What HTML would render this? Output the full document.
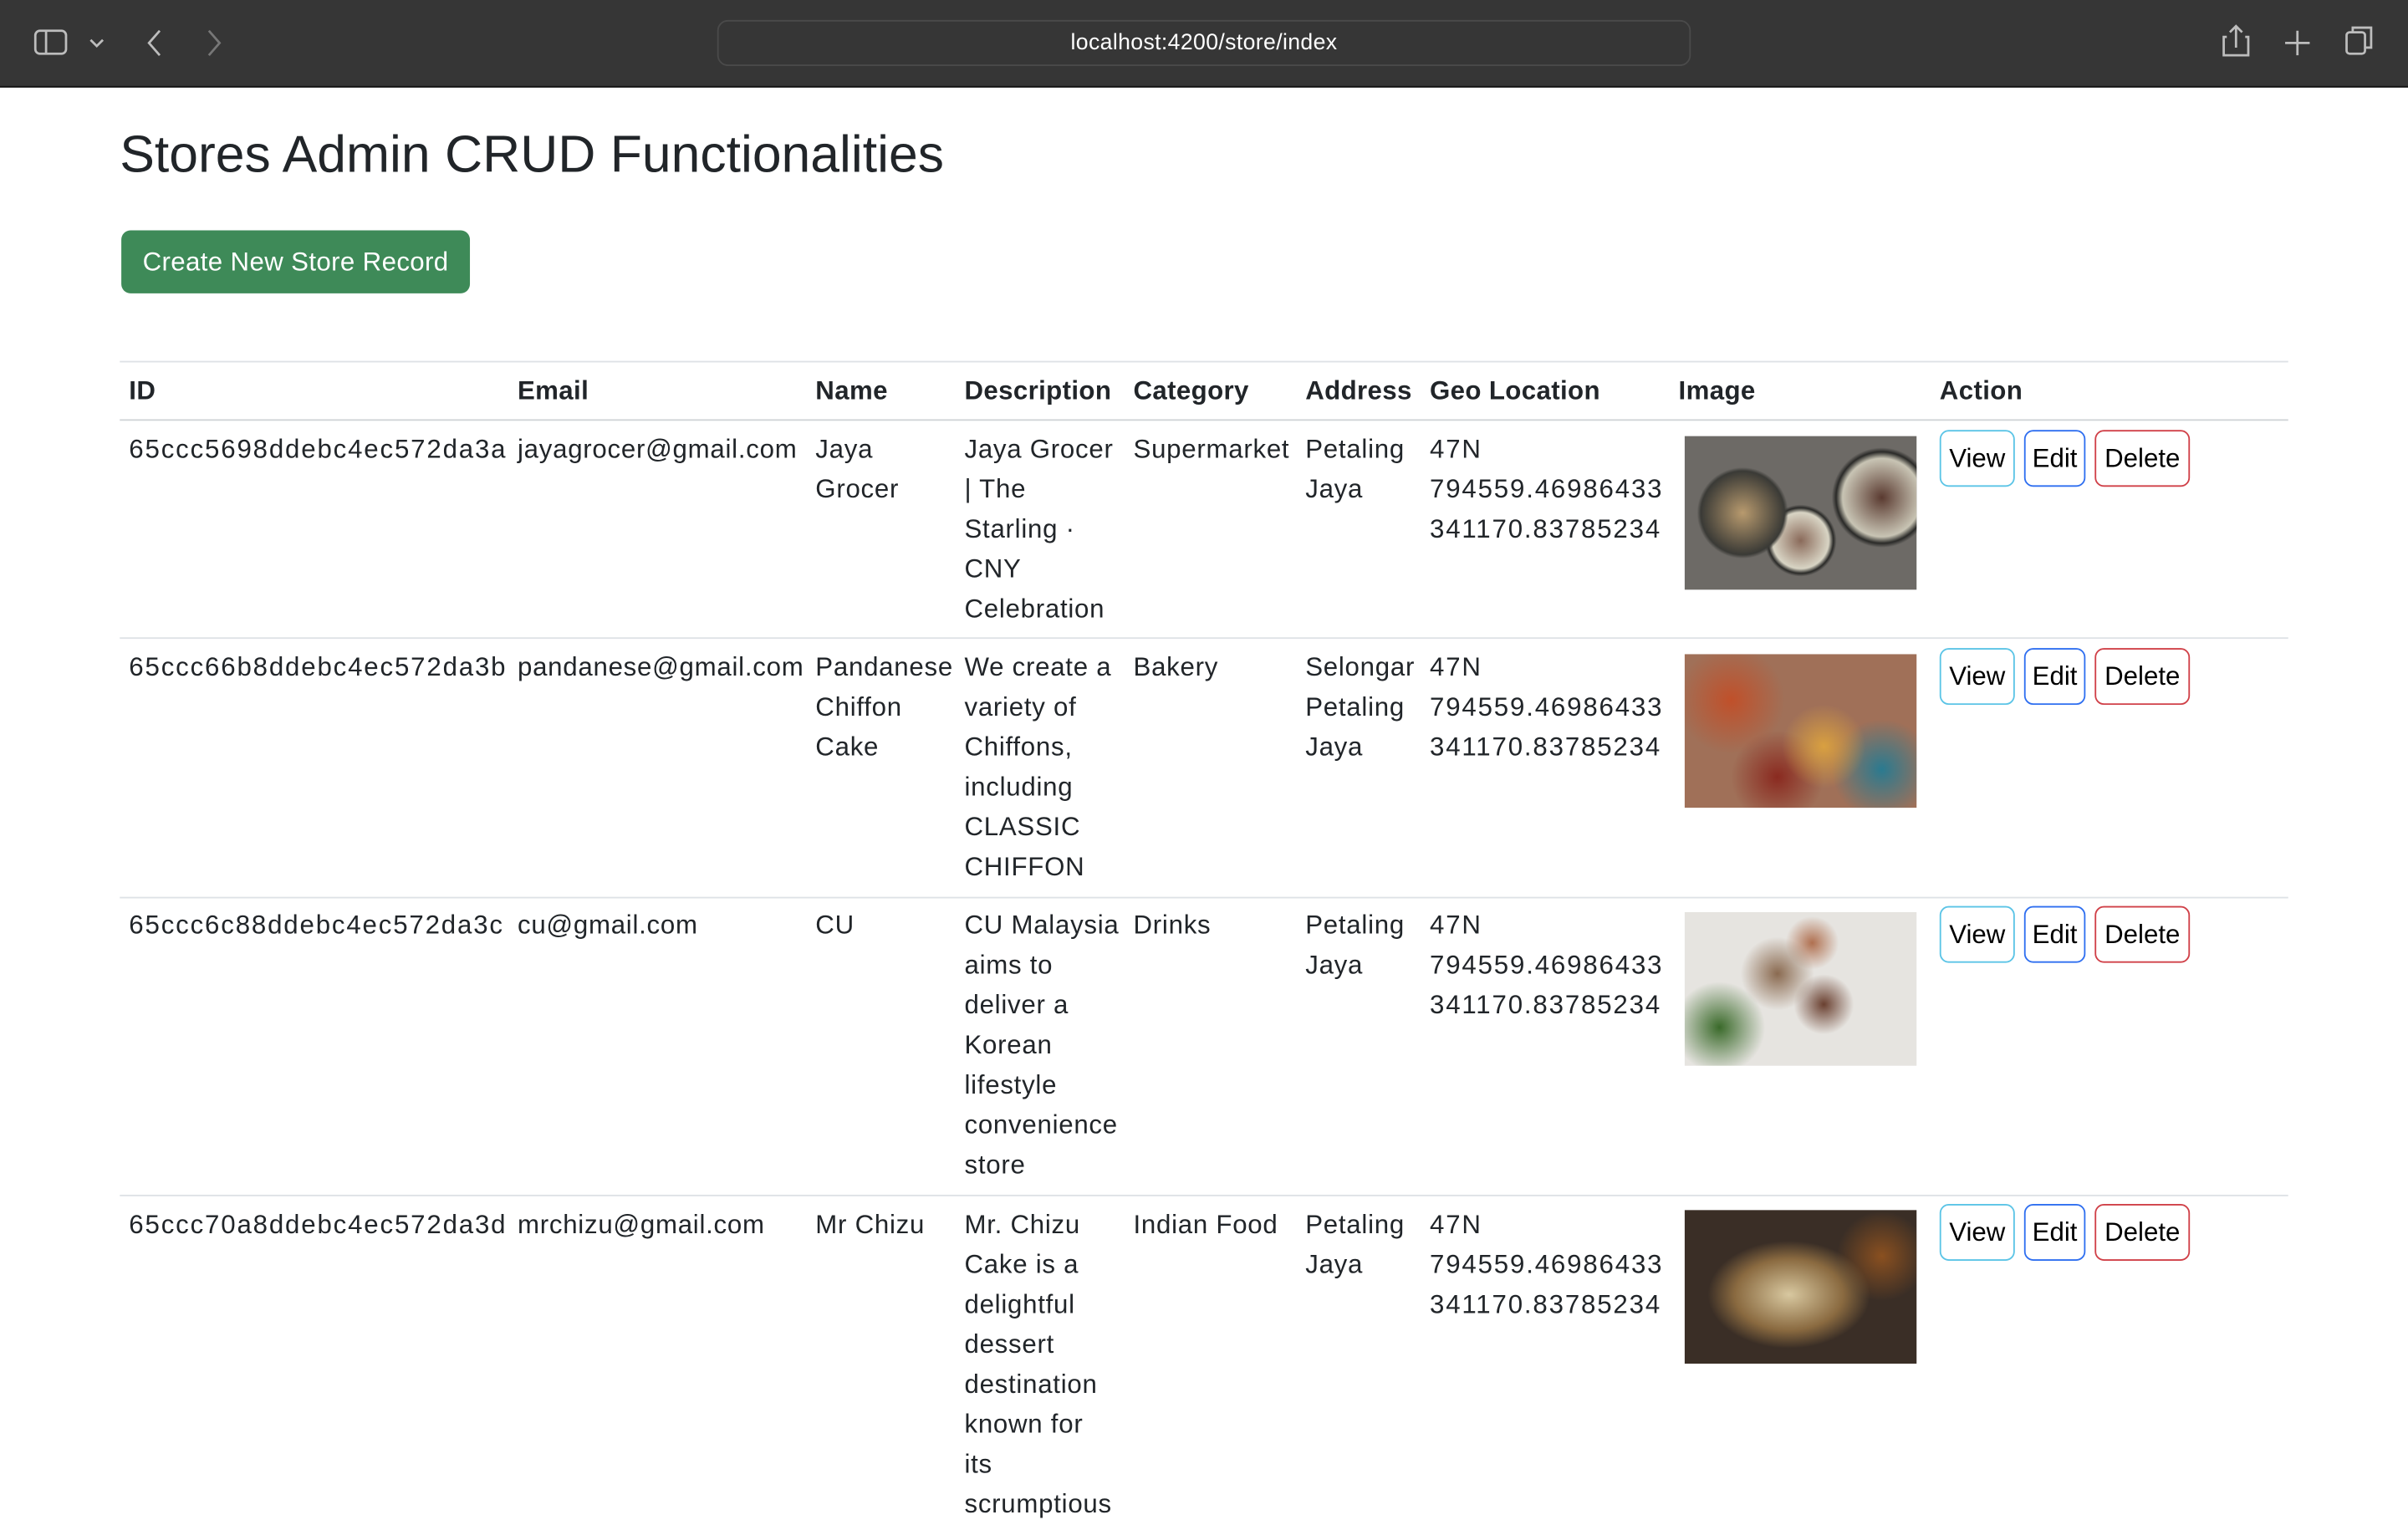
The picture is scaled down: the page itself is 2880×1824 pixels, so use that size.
<!DOCTYPE html>
<html><head><meta charset="utf-8"><style>
*{margin:0;padding:0;box-sizing:border-box}
html,body{width:2880px;height:1800px;overflow:hidden;background:#fff}
#s{position:absolute;left:0;top:0;width:1568px;height:980px;transform:scale(1.836735);transform-origin:0 0;font-family:"Liberation Sans",sans-serif;color:#212529}
.a{position:absolute}
.c{position:absolute;font-size:17px;line-height:26px;white-space:nowrap;letter-spacing:0.4px}
.d{letter-spacing:1px}
.h{font-weight:bold;letter-spacing:0.2px}
.ln{position:absolute;left:78px;width:1412px;height:1px;background:#dee2e6}
.b{position:absolute;height:37px;border:1px solid;border-radius:6px;font-size:17px;line-height:35px;text-align:center;color:#000}
.img{position:absolute;left:1097px;width:151px;height:100px}
</style></head><body><div id="s">
<div class="a" style="left:0;top:0;width:1568px;height:57px;background:#363636"></div>
<div class="a" style="left:0;top:56px;width:1568px;height:1px;background:#111"></div>
<svg class="a" style="left:0;top:0" width="1568" height="57" fill="none" stroke="#bdbdbd" stroke-width="1.5">
<rect x="23" y="20" width="20" height="15" rx="3"/><line x1="30" y1="20" x2="30" y2="35"/>
<path d="M59 26l4 4 4-4"/><path d="M104 20l-7 8 7 8"/><path d="M136 20l7 8-7 8" stroke="#777"/>
<path d="M1093 24a6 6 0 1 0 1 6M1093 19v5h-5" stroke-width="1.3"/>
<path d="M1450 24h-2v12h16V24h-2M1456 31V17M1452 21l4-4 4 4"/>
<path d="M1496 20v16M1488 28h16"/>
<rect x="1528" y="21" width="12" height="14" rx="2"/><path d="M1532 21v-3h12v13h-4"/>
</svg>
<div class="a" style="left:467px;top:13px;width:634px;height:30px;border:1px solid #4a4a4a;border-radius:7px;background:#363636"></div>
<div class="c" style="left:0;width:1568px;text-align:center;top:15px;color:#fff;font-size:14.5px;letter-spacing:0.2px">localhost:4200/store/index</div>

<div class="a" style="left:78px;top:79px;font-size:34px;line-height:44px;color:#212529">Stores Admin CRUD Functionalities</div>
<div class="a" style="left:79px;top:150px;width:227px;height:41px;background:#3e8a58;border-radius:6px;color:#fff;font-size:17px;line-height:41px;text-align:center;letter-spacing:0.2px">Create New Store Record</div>

<div class="ln" style="top:235px"></div>
<div class="ln" style="top:273px;background:#cfd3d7"></div>
<div class="ln" style="top:415px"></div>
<div class="ln" style="top:584px"></div>
<div class="ln" style="top:778px"></div>

<div class="c h" style="left:84px;top:242px">ID</div>
<div class="c h" style="left:337px;top:242px">Email</div>
<div class="c h" style="left:531px;top:242px">Name</div>
<div class="c h" style="left:628px;top:242px">Description</div>
<div class="c h" style="left:738px;top:242px">Category</div>
<div class="c h" style="left:850px;top:242px">Address</div>
<div class="c h" style="left:931px;top:242px">Geo Location</div>
<div class="c h" style="left:1093px;top:242px">Image</div>
<div class="c h" style="left:1263px;top:242px">Action</div>

<div class="c d" style="left:84px;top:280px">65ccc5698ddebc4ec572da3a</div>
<div class="c" style="left:337px;top:280px">jayagrocer@gmail.com</div>
<div class="c" style="left:531px;top:280px">Jaya<br>Grocer</div>
<div class="c" style="left:628px;top:280px">Jaya Grocer<br>| The<br>Starling ·<br>CNY<br>Celebration</div>
<div class="c" style="left:738px;top:280px">Supermarket</div>
<div class="c" style="left:850px;top:280px">Petaling<br>Jaya</div>
<div class="c d" style="left:931px;top:280px">47N<br>794559.46986433<br>341170.83785234</div>
<div class="img" style="top:284px;background:radial-gradient(circle at 25% 50%,#b89a6e 0,#3a3a36 22%,transparent 24%),radial-gradient(circle at 50% 68%,#8a6a5a 0,#d8d4c4 18%,#2a2a28 21%,transparent 23%),radial-gradient(circle at 85% 40%,#5a3a30 0,#c8c4b4 18%,#2a2a28 21%,transparent 23%),#6d6a66"></div>

<div class="c d" style="left:84px;top:422px">65ccc66b8ddebc4ec572da3b</div>
<div class="c" style="left:337px;top:422px">pandanese@gmail.com</div>
<div class="c" style="left:531px;top:422px">Pandanese<br>Chiffon<br>Cake</div>
<div class="c" style="left:628px;top:422px">We create a<br>variety of<br>Chiffons,<br>including<br>CLASSIC<br>CHIFFON</div>
<div class="c" style="left:738px;top:422px">Bakery</div>
<div class="c" style="left:850px;top:422px">Selongar<br>Petaling<br>Jaya</div>
<div class="c d" style="left:931px;top:422px">47N<br>794559.46986433<br>341170.83785234</div>
<div class="img" style="top:426px;background:radial-gradient(circle at 20% 30%,#c0502a 0,transparent 25%),radial-gradient(circle at 60% 60%,#d9a040 0,transparent 25%),radial-gradient(circle at 85% 75%,#2a7a90 0,transparent 22%),radial-gradient(circle at 40% 80%,#8a2a20 0,transparent 25%),#a07058"></div>

<div class="c d" style="left:84px;top:590px">65ccc6c88ddebc4ec572da3c</div>
<div class="c" style="left:337px;top:590px">cu@gmail.com</div>
<div class="c" style="left:531px;top:590px">CU</div>
<div class="c" style="left:628px;top:590px">CU Malaysia<br>aims to<br>deliver a<br>Korean<br>lifestyle<br>convenience<br>store</div>
<div class="c" style="left:738px;top:590px">Drinks</div>
<div class="c" style="left:850px;top:590px">Petaling<br>Jaya</div>
<div class="c d" style="left:931px;top:590px">47N<br>794559.46986433<br>341170.83785234</div>
<div class="img" style="top:594px;background:radial-gradient(circle at 15% 75%,#3a6a2a 0,transparent 20%),radial-gradient(circle at 40% 40%,#8a6a50 0,transparent 22%),radial-gradient(circle at 60% 60%,#6a4030 0,transparent 18%),radial-gradient(circle at 55% 20%,#b07050 0,transparent 15%),#e6e4e0"></div>

<div class="c d" style="left:84px;top:785px">65ccc70a8ddebc4ec572da3d</div>
<div class="c" style="left:337px;top:785px">mrchizu@gmail.com</div>
<div class="c" style="left:531px;top:785px">Mr Chizu</div>
<div class="c" style="left:628px;top:785px">Mr. Chizu<br>Cake is a<br>delightful<br>dessert<br>destination<br>known for<br>its<br>scrumptious</div>
<div class="c" style="left:738px;top:785px">Indian Food</div>
<div class="c" style="left:850px;top:785px">Petaling<br>Jaya</div>
<div class="c d" style="left:931px;top:785px">47N<br>794559.46986433<br>341170.83785234</div>
<div class="img" style="top:788px;background:radial-gradient(ellipse at 45% 55%,#d8c8a0 0,#8a6a40 30%,transparent 45%),radial-gradient(circle at 85% 30%,#8a5020 0,transparent 20%),#3a2e26"></div>

<div class="b" style="left:1263px;top:280px;width:49px;border-color:#5bc4e6">View</div>
<div class="b" style="left:1318px;top:280px;width:40px;border-color:#2f6ff0">Edit</div>
<div class="b" style="left:1364px;top:280px;width:62px;border-color:#d04048">Delete</div>
<div class="b" style="left:1263px;top:422px;width:49px;border-color:#5bc4e6">View</div>
<div class="b" style="left:1318px;top:422px;width:40px;border-color:#2f6ff0">Edit</div>
<div class="b" style="left:1364px;top:422px;width:62px;border-color:#d04048">Delete</div>
<div class="b" style="left:1263px;top:590px;width:49px;border-color:#5bc4e6">View</div>
<div class="b" style="left:1318px;top:590px;width:40px;border-color:#2f6ff0">Edit</div>
<div class="b" style="left:1364px;top:590px;width:62px;border-color:#d04048">Delete</div>
<div class="b" style="left:1263px;top:784px;width:49px;border-color:#5bc4e6">View</div>
<div class="b" style="left:1318px;top:784px;width:40px;border-color:#2f6ff0">Edit</div>
<div class="b" style="left:1364px;top:784px;width:62px;border-color:#d04048">Delete</div>
</div></body></html>
